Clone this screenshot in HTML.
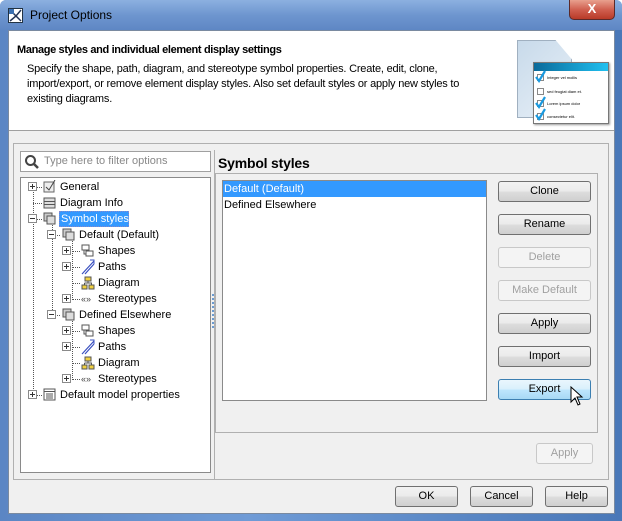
<!DOCTYPE html>
<html><head><style>
*{margin:0;padding:0;box-sizing:border-box}
body{width:622px;height:521px;overflow:hidden;font-family:"Liberation Sans","DejaVu Sans",sans-serif;font-size:11px;color:#000;background:#fff;position:relative}
.a{position:absolute}
.btn{position:absolute;border:1px solid #707070;border-radius:3px;background:linear-gradient(#f2f2f2 0%,#ebebeb 48%,#dddddd 52%,#cfcfcf 100%);text-align:center;font-size:11px;line-height:18px}
.dis{border-color:#c8c8c8;background:#f4f4f4;color:#a0a0a0}
.t{position:absolute;font-size:11px;line-height:14px;white-space:nowrap}
.ex{position:absolute;width:9px;height:9px;border:1px solid #8a8a8a;background:#fff}
.ex:before{content:"";position:absolute;left:1px;top:3px;width:5px;height:1px;background:#333}
.ex.p:after{content:"";position:absolute;left:3px;top:1px;width:1px;height:5px;background:#333}
.dh{position:absolute;height:1px;border-top:1px dotted #555}
.dv{position:absolute;width:1px;border-left:1px dotted #555}
</style></head><body>
<div class="a" style="left:0;top:0;width:622px;height:521px;background:linear-gradient(90deg,#5b86c4,#6f9bd6 40%,#4a78b8);border-radius:6px 6px 0 0"></div>
<div class="a" style="left:0;top:0;width:622px;height:30px;background:linear-gradient(#8cb0e0,#6e96cf 50%,#5e87c4);border-radius:6px 6px 0 0"></div>
<div class="a" style="left:8px;top:8px;width:15px;height:15px;background:#fff;border:1px solid #234"><svg width="13" height="13"><path d="M1 1L12 12M12 1L7 7L1 12" stroke="#235" stroke-width="1.5" fill="none"/><rect x="0" y="0" width="5" height="5" fill="#3a6fb0"/></svg></div>
<div class="t" style="left:30px;top:8px;font-size:12px;color:#000">Project Options</div>
<div class="a" style="left:569px;top:0;width:46px;height:20px;border:1px solid #5a2a2a;border-top:none;border-radius:0 0 5px 5px;background:linear-gradient(#e8a08e,#d06050 50%,#b83a28);color:#fff;text-align:center;font-weight:bold;font-size:13px;line-height:18px">X</div>
<div class="a" style="left:8px;top:30px;width:607px;height:484px;background:#f0f0f0;border:1px solid #7a8aa0"></div>
<div class="a" style="left:9px;top:31px;width:605px;height:100px;background:#fff;border-bottom:1px solid #a0a0a0"></div>
<div class="t" style="left:17px;top:43px;font-weight:bold;font-size:11px;letter-spacing:-0.35px">Manage styles and individual element display settings</div>
<div class="t" style="left:27px;top:62px;line-height:15px;font-size:11px;letter-spacing:-0.2px">Specify the shape, path, diagram, and stereotype symbol properties. Create, edit, clone,<br>import/export, or remove element display styles. Also set default styles or apply new styles to<br>existing diagrams.</div>
<div class="a" style="left:517px;top:40px;width:55px;height:78px;background:linear-gradient(135deg,#c8daea,#e8f0f8);border:1px solid #a0b0c0;clip-path:polygon(0 0,70% 0,100% 25%,100% 100%,0 100%)"></div>
<div class="a" style="left:533px;top:62px;width:76px;height:62px;background:#fff;border:1px solid #777;box-shadow:1px 1px 2px #999"></div>
<div class="a" style="left:534px;top:63px;width:74px;height:8px;background:linear-gradient(90deg,#0a6a9a,#20c0f0)"></div>
<div class="a" style="left:537px;top:74px;width:7px;height:7px;border:1px solid #888"></div><div class="a" style="left:547px;top:75px;font-size:4px">Integer vel mollis</div>
<div class="a" style="left:537px;top:88px;width:7px;height:7px;border:1px solid #888"></div><div class="a" style="left:547px;top:89px;font-size:4px">sed feugiat diam et.</div>
<div class="a" style="left:537px;top:100px;width:7px;height:7px;border:1px solid #888"></div><div class="a" style="left:547px;top:101px;font-size:4px">Lorem ipsum dolor</div>
<div class="a" style="left:537px;top:113px;width:7px;height:7px;border:1px solid #888"></div><div class="a" style="left:547px;top:114px;font-size:4px">consectetur elit.</div>
<svg class="a" style="left:535px;top:70px" width="14" height="52"><path d="M1 7L4 11L10 1M1 33L4 37L10 27M1 45L4 49L10 39" stroke="#1a9ae0" stroke-width="2.2" fill="none"/></svg>
<div class="a" style="left:13px;top:143px;width:596px;height:337px;border:1px solid #b0b0b0"></div>
<div class="a" style="left:20px;top:151px;width:191px;height:21px;background:#fff;border:1px solid #a0a0a0"></div>
<svg class="a" style="left:24px;top:154px" width="16" height="16"><circle cx="6.5" cy="6.5" r="4.5" stroke="#444" stroke-width="2" fill="none"/><path d="M10 10L14 14" stroke="#444" stroke-width="2.5"/></svg>
<div class="t" style="left:44px;top:154px;color:#888">Type here to filter options</div>
<div class="a" style="left:20px;top:177px;width:191px;height:296px;background:#fff;border:1px solid #8a8a8a"></div>
<div class="dv" style="left:33px;top:190px;height:205px"></div>
<div class="dv" style="left:52px;top:222px;height:94px"></div>
<div class="dv" style="left:72px;top:238px;height:62px"></div>
<div class="dv" style="left:72px;top:318px;height:62px"></div>
<div class="dh" style="left:33px;top:187px;width:9px"></div>
<div class="dh" style="left:33px;top:203px;width:9px"></div>
<div class="dh" style="left:33px;top:219px;width:9px"></div>
<div class="dh" style="left:33px;top:395px;width:9px"></div>
<div class="dh" style="left:52px;top:235px;width:8px"></div>
<div class="dh" style="left:52px;top:315px;width:8px"></div>
<div class="dh" style="left:72px;top:251px;width:8px"></div><div class="dh" style="left:72px;top:267px;width:8px"></div><div class="dh" style="left:72px;top:283px;width:8px"></div><div class="dh" style="left:72px;top:299px;width:8px"></div>
<div class="dh" style="left:72px;top:331px;width:8px"></div><div class="dh" style="left:72px;top:347px;width:8px"></div><div class="dh" style="left:72px;top:363px;width:8px"></div><div class="dh" style="left:72px;top:379px;width:8px"></div>
<div class="ex p" style="left:28px;top:182px"></div>
<div class="ex" style="left:28px;top:214px"></div>
<div class="ex p" style="left:28px;top:390px"></div>
<div class="ex" style="left:47px;top:230px"></div>
<div class="ex" style="left:47px;top:310px"></div>
<div class="ex p" style="left:62px;top:246px"></div><div class="ex p" style="left:62px;top:262px"></div><div class="ex p" style="left:62px;top:294px"></div>
<div class="ex p" style="left:62px;top:326px"></div><div class="ex p" style="left:62px;top:342px"></div><div class="ex p" style="left:62px;top:374px"></div>
<svg class="a" style="left:43px;top:180px" width="14" height="14"><rect x="1" y="2" width="10" height="10" fill="#eee" stroke="#666"/><path d="M3 7L6 10L12 0" stroke="#444" fill="none"/></svg>
<svg class="a" style="left:43px;top:196px" width="14" height="14"><rect x="1" y="2" width="11" height="10" fill="#ddd" stroke="#555"/><path d="M1 5.5H12M1 8.5H12" stroke="#555"/></svg>
<svg class="a" style="left:43px;top:212px" width="14" height="14"><rect x="1" y="1" width="8" height="8" fill="#ccc" stroke="#555"/><rect x="4" y="4" width="8" height="8" fill="#ddd" stroke="#555"/></svg>
<svg class="a" style="left:62px;top:228px" width="14" height="14"><rect x="1" y="1" width="8" height="8" fill="#ccc" stroke="#555"/><rect x="4" y="4" width="8" height="8" fill="#ddd" stroke="#555"/></svg>
<svg class="a" style="left:62px;top:308px" width="14" height="14"><rect x="1" y="1" width="8" height="8" fill="#ccc" stroke="#555"/><rect x="4" y="4" width="8" height="8" fill="#ddd" stroke="#555"/></svg>
<svg class="a" style="left:43px;top:388px" width="14" height="14"><rect x="1" y="1" width="11" height="11" fill="#fff" stroke="#555"/><path d="M1 3.5H12M3 6H10M3 8H10M3 10H10" stroke="#555"/></svg>
<svg class="a" style="left:81px;top:244px" width="14" height="14"><rect x="1" y="1" width="7" height="5" fill="#fff" stroke="#555"/><rect x="5" y="7" width="7" height="5" fill="#fff" stroke="#555"/><path d="M3 6V10H5" stroke="#555" fill="none"/></svg>
<svg class="a" style="left:81px;top:324px" width="14" height="14"><rect x="1" y="1" width="7" height="5" fill="#fff" stroke="#555"/><rect x="5" y="7" width="7" height="5" fill="#fff" stroke="#555"/><path d="M3 6V10H5" stroke="#555" fill="none"/></svg>
<svg class="a" style="left:81px;top:259px" width="14" height="16"><path d="M1 15L13 2M4 15L13 5" stroke="#3a50c0" stroke-width="1.2"/><path d="M9 1H13V5" stroke="#3a50c0" fill="none"/></svg>
<svg class="a" style="left:81px;top:339px" width="14" height="16"><path d="M1 15L13 2M4 15L13 5" stroke="#3a50c0" stroke-width="1.2"/><path d="M9 1H13V5" stroke="#3a50c0" fill="none"/></svg>
<svg class="a" style="left:81px;top:276px" width="14" height="14"><rect x="4" y="1" width="6" height="4" fill="#f0d040" stroke="#555"/><rect x="1" y="9" width="5" height="4" fill="#f0d040" stroke="#555"/><rect x="8" y="9" width="5" height="4" fill="#f0d040" stroke="#555"/><path d="M7 5V7M3.5 7H10.5V9M3.5 7V9" stroke="#555" fill="none"/></svg>
<svg class="a" style="left:81px;top:356px" width="14" height="14"><rect x="4" y="1" width="6" height="4" fill="#f0d040" stroke="#555"/><rect x="1" y="9" width="5" height="4" fill="#f0d040" stroke="#555"/><rect x="8" y="9" width="5" height="4" fill="#f0d040" stroke="#555"/><path d="M7 5V7M3.5 7H10.5V9M3.5 7V9" stroke="#555" fill="none"/></svg>
<div class="t" style="left:81px;top:292px;font-size:9px;color:#444">«»</div>
<div class="t" style="left:81px;top:372px;font-size:9px;color:#444">«»</div>
<div class="t" style="left:60px;top:180px">General</div>
<div class="t" style="left:60px;top:196px">Diagram Info</div>
<div class="a" style="left:59px;top:211px;width:70px;height:16px;background:#3399ff;border:1px dotted #88c"></div>
<div class="t" style="left:61px;top:212px;color:#fff">Symbol styles</div>
<div class="t" style="left:79px;top:228px">Default (Default)</div>
<div class="t" style="left:98px;top:244px">Shapes</div>
<div class="t" style="left:98px;top:260px">Paths</div>
<div class="t" style="left:98px;top:276px">Diagram</div>
<div class="t" style="left:98px;top:292px">Stereotypes</div>
<div class="t" style="left:79px;top:308px">Defined Elsewhere</div>
<div class="t" style="left:98px;top:324px">Shapes</div>
<div class="t" style="left:98px;top:340px">Paths</div>
<div class="t" style="left:98px;top:356px">Diagram</div>
<div class="t" style="left:98px;top:372px">Stereotypes</div>
<div class="t" style="left:60px;top:388px">Default model properties</div>
<div class="a" style="left:212px;top:294px;width:2px;height:34px;border-left:2px dotted #6a9ad0"></div>
<div class="a" style="left:214px;top:150px;width:1px;height:330px;background:#b0b0b0"></div>
<div class="t" style="left:218px;top:155px;font-weight:bold;font-size:14px;line-height:16px;letter-spacing:-0.2px">Symbol styles</div>
<div class="a" style="left:215px;top:173px;width:383px;height:260px;border:1px solid #b0b0b0"></div>
<div class="a" style="left:222px;top:180px;width:265px;height:221px;background:#fff;border:1px solid #8a8a8a"></div>
<div class="a" style="left:223px;top:181px;width:263px;height:16px;background:#3399ff"></div>
<div class="t" style="left:224px;top:182px;color:#fff">Default (Default)</div>
<div class="t" style="left:224px;top:198px">Defined Elsewhere</div>
<div class="btn" style="left:498px;top:181px;width:93px;height:21px">Clone</div>
<div class="btn" style="left:498px;top:214px;width:93px;height:21px">Rename</div>
<div class="btn dis" style="left:498px;top:247px;width:93px;height:21px">Delete</div>
<div class="btn dis" style="left:498px;top:280px;width:93px;height:21px">Make Default</div>
<div class="btn" style="left:498px;top:313px;width:93px;height:21px">Apply</div>
<div class="btn" style="left:498px;top:346px;width:93px;height:21px">Import</div>
<div class="btn" style="left:498px;top:379px;width:93px;height:21px;border-color:#3c7fb1;background:linear-gradient(#eaf6fd,#d9f0fc 48%,#bee6fd 52%,#a7d9f5)">Export</div>
<svg class="a" style="left:570px;top:386px" width="14" height="22"><path d="M1 1V16L5 12L8 19L10 18L7 11H12Z" fill="#fff" stroke="#000"/></svg>
<div class="btn dis" style="left:536px;top:443px;width:57px;height:21px">Apply</div>
<div class="btn" style="left:395px;top:486px;width:63px;height:21px">OK</div>
<div class="btn" style="left:470px;top:486px;width:63px;height:21px">Cancel</div>
<div class="btn" style="left:545px;top:486px;width:63px;height:21px">Help</div>
</body></html>
